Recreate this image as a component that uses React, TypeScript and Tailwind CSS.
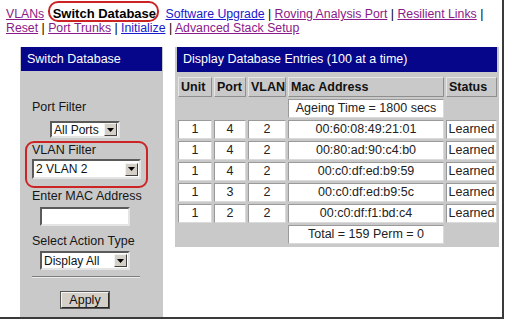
import React from 'react'

const visited = 'text-[#8a1a8a] underline'
const fresh = 'text-[#1a1acc] underline'

function Arrow() {
  return (
    <span className="flex h-[13px] w-[13px] items-center justify-center border border-t-[#f2f2f2] border-l-[#f2f2f2] border-b-[#404040] border-r-[#404040] bg-[#d4d0c8]">
      <svg width="7" height="4" viewBox="0 0 7 4">
        <path d="M0 0h7L3.5 4z" fill="#000" />
      </svg>
    </span>
  )
}

function Select({ label, className }: { label: string; className: string }) {
  return (
    <div
      className={`flex items-center justify-between border-2 border-t-[#5a5a5a] border-l-[#5a5a5a] border-b-[#e4e4e4] border-r-[#e4e4e4] bg-white pr-[1px] text-[12px] text-[#111] ${className}`}
    >
      <span className="pl-[2px] leading-none whitespace-nowrap">{label}</span>
      <Arrow />
    </div>
  )
}

const head =
  'flex h-[20px] items-center pl-[2px] border border-t-[#e6e6e6] border-l-[#e6e6e6] border-b-[#8e8e8e] border-r-[#8e8e8e] text-[12.5px] font-bold text-[#111] whitespace-nowrap'
const cell =
  'flex h-[19px] items-center justify-center bg-white border border-t-[#9a9a9a] border-l-[#9a9a9a] border-b-[#dadada] border-r-[#dadada] text-[12.5px] text-[#222] whitespace-nowrap'

const entries = [
  { unit: 1, port: 4, vlan: 2, mac: '00:60:08:49:21:01' },
  { unit: 1, port: 4, vlan: 2, mac: '00:80:ad:90:c4:b0' },
  { unit: 1, port: 4, vlan: 2, mac: '00:c0:df:ed:b9:59' },
  { unit: 1, port: 3, vlan: 2, mac: '00:c0:df:ed:b9:5c' },
  { unit: 1, port: 2, vlan: 2, mac: '00:c0:df:f1:bd:c4' },
]

export default function App() {
  return (
    <div className="flex h-[319px] w-[504px] flex-col overflow-hidden border-r-2 border-b-2 border-[#3a3a3a] bg-white font-['Liberation_Sans',Arial,sans-serif]">
      {/* nav links */}
      <div className="pt-[7px] pl-[6px] text-[12.3px] leading-[14px] whitespace-nowrap text-black">
        <a className={visited}>VLANs</a>{' '}
        <span className="relative ml-[5px] mr-[6px] text-[13px] font-bold text-black">
          Switch Database
          <span className="absolute -top-[5px] -bottom-[1px] -left-[5px] -right-[3px] rounded-[10px] border-2 border-[#cc2424]" />
        </span>{' '}
        <a className={fresh}>Software Upgrade</a> | <a className={visited}>Roving Analysis Port</a> |{' '}
        <a className={visited}>Resilient Links</a> |
        <br />
        <a className={visited}>Reset</a> | <a className={visited}>Port Trunks</a> | <a className={fresh}>Initialize</a> |{' '}
        <a className={visited}>Advanced Stack Setup</a>
      </div>

      <div className="mt-[12px] flex flex-1 items-start gap-[12px] pl-[20px]">
        {/* left form panel */}
        <div className="flex w-[143px] flex-col self-stretch bg-[#c9c9c9] px-[1px]">
          <div className="flex h-[24px] items-center bg-[#06068a] pl-[6px] text-[12.5px] text-white">Switch Database</div>
          <div className="flex flex-col pl-[11px] text-[12.5px] leading-[15px] text-[#161616] whitespace-nowrap">
            <div className="mt-[29px]">Port Filter</div>
            <Select label="All Ports" className="mt-[6px] ml-[18px] h-[17px] w-[70px]" />
            <div className="mt-[3px] -ml-[7px] w-[123px] rounded-[9px] border-2 border-[#cc2424] pl-[5px] pb-[7px]">
              <div>VLAN Filter</div>
              <Select label="2 VLAN 2" className="mt-[1px] h-[20px] w-[109px]" />
            </div>
            <div className="mt-[1px]">Enter MAC Address</div>
            <div className="mt-[3px] ml-[8px] h-[19px] w-[90px] border-2 border-t-[#5a5a5a] border-l-[#5a5a5a] border-b-[#e4e4e4] border-r-[#e4e4e4] bg-white" />
            <div className="mt-[8px]">Select Action Type</div>
            <Select label="Display All" className="mt-[2px] ml-[8px] h-[19px] w-[90px]" />
            <div className="mt-[6px] w-[108px] border-t border-b border-t-[#7c7c7c] border-b-[#ececec]" />
            <button className="mt-[14px] ml-[29px] flex h-[16px] w-[48px] items-center justify-center border border-t-[#f4f4f4] border-l-[#f4f4f4] border-b-[#2a2a2a] border-r-[#2a2a2a] bg-[#d4d0c8] text-[12.5px] leading-none text-[#111] outline outline-1 outline-[#555]">
              Apply
            </button>
          </div>
        </div>

        {/* right table panel */}
        <div className="flex w-[324px] flex-col bg-[#c9c9c9] px-[2px] pb-[3px]">
          <div className="flex h-[25px] items-center bg-[#06068a] pl-[6px] text-[12.5px] text-white">
            Display Database Entries (100 at a time)
          </div>
          <div className="mt-[5px] ml-[1px] grid grid-cols-[34px_32px_38px_156px_51px] gap-[2px]">
            <div className={head}>Unit</div>
            <div className={head}>Port</div>
            <div className={head}>VLAN</div>
            <div className={head}>Mac Address</div>
            <div className={head}>Status</div>

            <div className="col-span-3" />
            <div className={cell}>Ageing Time = 1800 secs</div>
            <div />

            {entries.map((e, i) => (
              <React.Fragment key={i}>
                <div className={cell}>{e.unit}</div>
                <div className={cell}>{e.port}</div>
                <div className={cell}>{e.vlan}</div>
                <div className={cell}>{e.mac}</div>
                <div className={cell}>Learned</div>
              </React.Fragment>
            ))}

            <div className="col-span-3" />
            <div className={cell}>Total = 159 Perm = 0</div>
            <div />
          </div>
        </div>
      </div>
    </div>
  )
}
